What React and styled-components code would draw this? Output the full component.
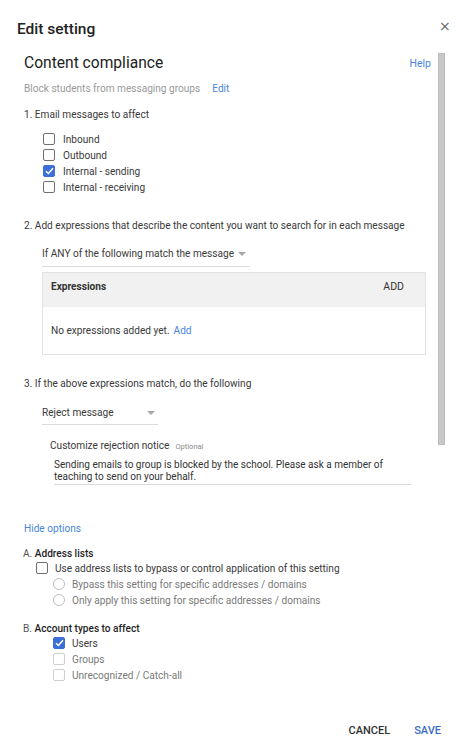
import React from 'react';
import styled, { createGlobalStyle } from 'styled-components';

const GlobalStyle = createGlobalStyle`
  html, body {
    margin: 0;
    padding: 0;
    background: #fff;
  }
  body {
    font-family: Roboto, "Liberation Sans", Arial, sans-serif;
    color: #3a3a3a;
    font-size: 10.1px;
  }
`;

const Dialog = styled.div`
  width: 457px;
  height: 750px;
  display: flex;
  flex-direction: column;
  background: #fff;
  overflow: hidden;
`;

const Header = styled.div`
  position: relative;
  height: 48px;
  padding: 18px 0 0 17px;
  box-sizing: border-box;
`;

const DialogTitle = styled.h1`
  margin: 0;
  font-size: 15.5px;
  line-height: 22px;
  font-weight: 500;
  color: #222;
`;

const CloseButton = styled.button`
  position: absolute;
  top: 18px;
  right: 8px;
  width: 10px;
  height: 16px;
  padding: 0;
  border: 0;
  background: none;
  color: #666;
  font-size: 14px;
  line-height: 16px;
  font-family: "DejaVu Sans", sans-serif;
  cursor: pointer;
`;

const Body = styled.div`
  flex: 1;
  display: flex;
  min-height: 0;
`;

const Content = styled.div`
  flex: 1;
  padding: 4px 0 0 24px;
  min-width: 0;
`;

const Rail = styled.div`
  width: 7px;
  margin: 5px 12px 0 7px;
`;

const Thumb = styled.div`
  height: 392px;
  background: #c8c8c8;
  border: 1px solid #bcbcbc;
  box-sizing: border-box;
`;

const TitleRow = styled.div`
  display: flex;
  justify-content: space-between;
  align-items: center;
  height: 22px;
`;

const SectionTitle = styled.h2`
  margin: 0;
  font-size: 15.6px;
  font-weight: 400;
  color: #222;
  line-height: 22px;
`;

const Link = styled.a`
  color: #4a86dc;
  font-size: ${p => p.$size || 10.1}px;
  text-decoration: none;
  margin-left: ${p => p.$gap || 0}px;
  cursor: pointer;
`;

const Subtitle = styled.div`
  margin-top: 7px;
  line-height: 16px;
  color: #9a9a9a;
`;

const StepLabel = styled.div`
  margin-top: ${p => p.$top}px;
  line-height: 16px;
  color: #3a3a3a;
`;

const OptionList = styled.div`
  display: flex;
  flex-direction: column;
  margin-top: ${p => p.$top || 0}px;
  padding-left: ${p => p.$indent}px;
`;

const Row = styled.label`
  display: flex;
  align-items: center;
  height: 16px;
  color: ${p => p.$muted ? '#7a7a7a' : '#3a3a3a'};
  cursor: pointer;
`;

const Box = styled.span`
  width: 12px;
  height: 12px;
  box-sizing: border-box;
  border-radius: 2px;
  border: 1.5px solid ${p => p.$checked ? '#3e6fd6' : p.$faint ? '#cfcfcf' : '#707070'};
  background: ${p => p.$checked ? '#3e6fd6' : '#fff'};
  display: flex;
  align-items: center;
  justify-content: center;
  margin-right: ${p => p.$gap || 8}px;
  flex-shrink: 0;
`;

const Radio = styled.span`
  width: 12px;
  height: 12px;
  box-sizing: border-box;
  border-radius: 50%;
  border: 1.2px solid #bdbdbd;
  margin-right: 7px;
  flex-shrink: 0;
`;

const Select = styled.div`
  display: flex;
  align-items: center;
  justify-content: space-between;
  width: ${p => p.$width}px;
  margin: ${p => p.$top}px 0 0 18px;
  padding-bottom: ${p => p.$pad}px;
  line-height: 16px;
  border-bottom: 1px solid #dcdcdc;
  color: #3a3a3a;
`;

const Caret = styled.span`
  width: 0;
  height: 0;
  border-left: 4px solid transparent;
  border-right: 4px solid transparent;
  border-top: 4px solid #a8a8a8;
  margin-right: ${p => p.$right}px;
`;

const ExprBox = styled.div`
  margin: 5px 0 0 18px;
  width: 384px;
  border: 1px solid #e3e3e3;
  box-sizing: border-box;
`;

const ExprHead = styled.div`
  display: flex;
  justify-content: space-between;
  align-items: flex-start;
  height: 34px;
  padding: 6px 21px 0 8px;
  box-sizing: border-box;
  line-height: 16px;
  background: #f1f1f1;
`;

const ExprTitle = styled.span`
  font-weight: 700;
  color: #333;
`;

const AddButton = styled.span`
  font-size: 10.5px;
  color: #333;
`;

const ExprBody = styled.div`
  height: 47px;
  padding: 16px 8px 0;
  box-sizing: border-box;
  line-height: 16px;
`;

const Notice = styled.div`
  margin: 13px 0 0 26px;
`;

const NoticeLabel = styled.div`
  line-height: 16px;
  color: #3a3a3a;
`;

const Optional = styled.span`
  font-size: 7.5px;
  color: #8a8a8a;
  margin-left: 6px;
`;

const NoticeText = styled.div`
  margin: 4px 0 0 4px;
  width: 357px;
  line-height: 12px;
  font-size: 10px;
  padding-bottom: 1px;
  border-bottom: 1px solid #dcdcdc;
  color: #333;
`;

const OptionsToggle = styled.div`
  margin-top: 36px;
  line-height: 16px;
`;

const Group = styled.div`
  margin-top: ${p => p.$top}px;
  margin-left: -1px;
`;

const GroupTitle = styled.div`
  line-height: 13px;
  color: #555;
`;

const GroupName = styled.span`
  color: #1f1f1f;
  font-weight: 500;
`;

const Footer = styled.div`
  display: flex;
  justify-content: flex-end;
  align-items: center;
  gap: 24px;
  height: 40px;
  padding: 0 16px 0 0;
`;

const FooterButton = styled.button`
  border: 0;
  background: none;
  padding: 0;
  font-family: inherit;
  font-size: 11px;
  font-weight: 500;
  color: ${p => p.$primary ? '#3b6dc8' : '#333'};
  cursor: pointer;
`;

const Check = () => (
  <svg width="9" height="8" viewBox="0 0 9 8">
    <path d="M1 4.2 L3.4 6.5 L8 1.3" fill="none" stroke="#fff" strokeWidth="1.5" />
  </svg>
);

const CheckRow = ({ label, checked, faint, muted, gap }) => (
  <Row $muted={muted}>
    <Box $checked={checked} $faint={faint} $gap={gap}>{checked && <Check />}</Box>
    {label}
  </Row>
);

const RadioRow = ({ label }) => (
  <Row $muted>
    <Radio />
    {label}
  </Row>
);

const messageTypes = [
  { label: 'Inbound' },
  { label: 'Outbound' },
  { label: 'Internal - sending', checked: true },
  { label: 'Internal - receiving' },
];

const accountTypes = [
  { label: 'Users', checked: true },
  { label: 'Groups', faint: true },
  { label: 'Unrecognized / Catch-all', faint: true },
];

export default function App() {
  return (
    <Dialog>
      <GlobalStyle />
      <Header>
        <DialogTitle>Edit setting</DialogTitle>
        <CloseButton aria-label="Close">×</CloseButton>
      </Header>
      <Body>
        <Content>
          <TitleRow>
            <SectionTitle>Content compliance</SectionTitle>
            <Link $size={10.5}>Help</Link>
          </TitleRow>
          <Subtitle>
            Block students from messaging groups
            <Link $gap={12}>Edit</Link>
          </Subtitle>

          <StepLabel $top={10}>1. Email messages to affect</StepLabel>
          <OptionList $top={8} $indent={19}>
            {messageTypes.map(t => <CheckRow key={t.label} {...t} />)}
          </OptionList>

          <StepLabel $top={23}>2. Add expressions that describe the content you want to search for in each message</StepLabel>
          <Select $top={12} $width={208} $pad={4}>
            If ANY of the following match the message
            <Caret $right={4} />
          </Select>
          <ExprBox>
            <ExprHead>
              <ExprTitle>Expressions</ExprTitle>
              <AddButton>ADD</AddButton>
            </ExprHead>
            <ExprBody>
              No expressions added yet.
              <Link $gap={4}>Add</Link>
            </ExprBody>
          </ExprBox>

          <StepLabel $top={21}>3. If the above expressions match, do the following</StepLabel>
          <Select $top={13} $width={116} $pad={3}>
            Reject message
            <Caret $right={3} />
          </Select>
          <Notice>
            <NoticeLabel>
              Customize rejection notice
              <Optional>Optional</Optional>
            </NoticeLabel>
            <NoticeText>
              Sending emails to group is blocked by the school. Please ask a member of teaching to send on your behalf.
            </NoticeText>
          </Notice>

          <OptionsToggle>
            <Link>Hide options</Link>
          </OptionsToggle>

          <Group $top={10}>
            <GroupTitle>A. <GroupName>Address lists</GroupName></GroupTitle>
            <OptionList $indent={13}>
              <CheckRow label="Use address lists to bypass or control application of this setting" gap={7} />
              <OptionList $indent={17}>
                <RadioRow label="Bypass this setting for specific addresses / domains" />
                <RadioRow label="Only apply this setting for specific addresses / domains" />
              </OptionList>
            </OptionList>
          </Group>

          <Group $top={14}>
            <GroupTitle>B. <GroupName>Account types to affect</GroupName></GroupTitle>
            <OptionList $indent={30}>
              {accountTypes.map(t => <CheckRow key={t.label} {...t} muted={t.faint} gap={7} />)}
            </OptionList>
          </Group>
        </Content>
        <Rail>
          <Thumb />
        </Rail>
      </Body>
      <Footer>
        <FooterButton>CANCEL</FooterButton>
        <FooterButton $primary>SAVE</FooterButton>
      </Footer>
    </Dialog>
  );
}
